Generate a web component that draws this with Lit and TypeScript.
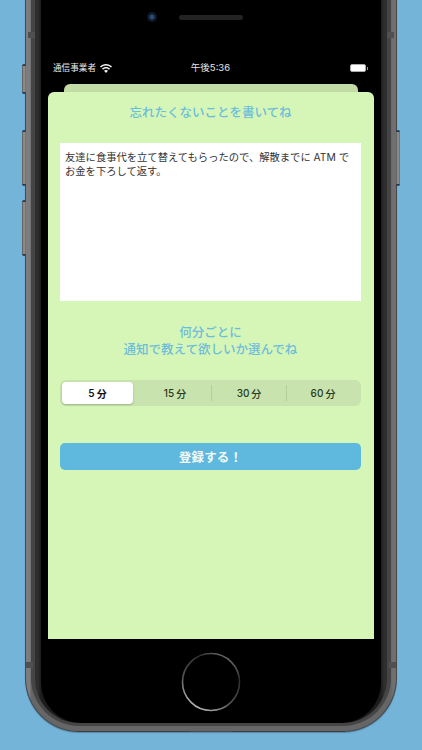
import { LitElement, html, css } from "lit";
import { customElement } from "lit/decorators.js";

@customElement("app-root")
export class AppRoot extends LitElement {
  static styles = css`
    :host {
      display: flex;
      flex-direction: column;
      justify-content: flex-end;
      align-items: center;
      width: 422px;
      height: 750px;
      box-sizing: border-box;
      padding-bottom: 18px;
      overflow: hidden;
      background: #74b4d9;
      font-family: Inter, "Noto Sans CJK JP", sans-serif;
    }
    * { box-sizing: border-box; }
    .phone {
      position: relative;
      flex: none;
      width: 372px;
      height: 792px;
      padding: 1px;
      border-radius: 54px;
      background: #47494b;
      box-shadow: 0 1px 1px rgba(40, 60, 80, 0.35);
    }
    .band1 {
      height: 100%;
      padding: 5px;
      border-radius: 53px;
      background: linear-gradient(90deg, #7d7d7d 0 4px, #666 5px calc(100% - 5px), #6f6f6f calc(100% - 4px));
    }
    .band2 {
      height: 100%;
      padding: 4px 4px 3px;
      border-radius: 48px;
      background: #454545;
    }
    .band3 {
      height: 100%;
      padding: 6px 6px 0;
      border-radius: 44px;
      background: linear-gradient(90deg, #2e2e2e 0 3px, #1c1c1c 6px calc(100% - 6px), #2e2e2e calc(100% - 3px));
    }
    .screen {
      display: flex;
      flex-direction: column;
      height: 100%;
      padding: 56px 7px 0;
      border-radius: 40px;
      background: #000;
    }
    .sensors {
      display: flex;
      justify-content: center;
      align-items: center;
      gap: 22px;
      height: 10px;
      margin: 0 -7px;
      padding-right: 32px;
    }
    .camera {
      width: 10px;
      height: 10px;
      border-radius: 50%;
      background: radial-gradient(circle, #2b4a78 0 2px, #0b1a2c 3px, #141a22 5px);
    }
    .speaker {
      width: 64px;
      height: 5px;
      border-radius: 3px;
      background: #232323;
    }
    .status {
      display: grid;
      grid-template-columns: 1fr auto 1fr;
      align-items: center;
      height: 14px;
      margin: 39px -7px 0;
      padding: 0 13px 0 12px;
      color: #e8e8e8;
      font-size: 8.6px;
      line-height: 14px;
    }
    .carrier { display: flex; align-items: center; gap: 4px; }
    .wifi { width: 12px; height: 9px; }
    .time { font-size: 9.5px; }
    .battery {
      justify-self: end;
      display: flex;
      align-items: center;
      gap: 1px;
    }
    .cell {
      width: 16px;
      height: 8px;
      border-radius: 2px;
      background: #fff;
      border: 1px solid #aaa;
    }
    .nub { width: 1px; height: 3px; background: #999; }
    .back {
      flex: none;
      height: 8px;
      margin: 9px 16px 0;
      border-radius: 6px 6px 0 0;
      background: #c3dba5;
    }
    .card {
      flex: none;
      display: flex;
      flex-direction: column;
      height: 547px;
      padding: 12px 13px 0 12px;
      border-radius: 6px 6px 0 0;
      background: #d6f6b8;
    }
    .heading {
      margin: 0;
      text-align: center;
      color: #6cbdd9;
      font-size: 12.5px;
      font-weight: 500;
      line-height: 17px;
    }
    .memo {
      height: 158px;
      margin-top: 22px;
      padding: 7px 5px;
      background: #fff;
      color: #333;
      font-size: 10.3px;
      line-height: 14px;
    }
    .sub { margin-top: 23px; }
    .segments {
      display: grid;
      grid-template-columns: 75px 75px 75px 1fr;
      height: 26px;
      margin-top: 22px;
      padding: 2px;
      border-radius: 6px;
      background: #c8e3ae;
    }
    .seg {
      display: flex;
      align-items: center;
      justify-content: center;
      color: #2a3a22;
      font-size: 10px;
      font-weight: 500;
      gap: 2px;
      border-right: 1px solid #b4cf9c;
      margin: 3px 0;
    }
    .seg:last-child, .seg.on { border-right: 0; }
    .seg:first-child + .seg { padding-left: 2px; }
    .seg.on {
      margin: 0 4px 0 0;
      border-radius: 4px;
      background: #fff;
      color: #111;
      font-weight: 600;
      box-shadow: 0 1px 2px rgba(60, 80, 40, 0.3);
    }
    .submit {
      display: flex;
      align-items: center;
      justify-content: center;
      height: 27px;
      margin-top: 37px;
      border-radius: 5px;
      background: #5fb8de;
      color: #f2f8f4;
      font-size: 12.5px;
      font-weight: 700;
      letter-spacing: 0.2px;
    }
    .home {
      display: flex;
      justify-content: center;
      margin-top: 13px;
    }
    .ring { width: 60px; height: 60px; }
    .key {
      position: absolute;
      width: 4px;
      border-radius: 2px;
      background: linear-gradient(90deg, #555, #999 50%, #666);
      border-top: 2px solid #2c3c4c;
      border-bottom: 2px solid #2c3c4c;
    }
    .k1 { left: -3px; bottom: 638px; height: 30px; }
    .k2 { left: -3px; bottom: 546px; height: 56px; }
    .k3 { left: -3px; bottom: 476px; height: 56px; }
    .k4 { right: -3px; bottom: 546px; height: 56px; }
    .seam {
      position: absolute;
      width: 7px;
      height: 6px;
      background: #505050;
    }
    .s1 { left: 1px; bottom: 64px; }
    .s2 { right: 1px; bottom: 64px; }
    .s3 { left: 3px; bottom: 694px; }
    .s4 { right: 3px; bottom: 694px; }
    .edge {
      position: absolute;
      bottom: 0;
      height: 1.5px;
      background: #3c3e40;
    }
    .e1 { left: 52px; width: 113px; }
    .e2 { right: 52px; width: 113px; }
  `;

  render() {
    return html`
      <div class="phone">
        <span class="key k1"></span>
        <span class="key k2"></span>
        <span class="key k3"></span>
        <span class="key k4"></span>
        <span class="seam s1"></span>
        <span class="seam s2"></span>
        <span class="seam s3"></span>
        <span class="seam s4"></span>
        <span class="edge e1"></span>
        <span class="edge e2"></span>
        <div class="band1"><div class="band2"><div class="band3">
          <div class="screen">
            <div class="sensors">
              <span class="camera"></span>
              <span class="speaker"></span>
            </div>
            <div class="status">
              <div class="carrier">
                <span>通信事業者</span>
                <svg class="wifi" viewBox="0 0 12 9" fill="#f4f4f4">
                  <path d="M6 0C3.7 0 1.6.9 0 2.4l1 1.1C2.3 2.2 4.1 1.5 6 1.5s3.7.7 5 2l1-1.1C10.4.9 8.3 0 6 0z"/>
                  <path d="M6 3C4.5 3 3.1 3.6 2 4.6l1 1.1C3.8 5 4.9 4.5 6 4.5s2.2.5 3 1.2l1-1.1C8.9 3.6 7.5 3 6 3z"/>
                  <path d="M6 6c-.8 0-1.5.3-2 .8L6 9l2-2.2C7.5 6.3 6.8 6 6 6z"/>
                </svg>
              </div>
              <span class="time">午後5:36</span>
              <div class="battery"><span class="cell"></span><span class="nub"></span></div>
            </div>
            <div class="back"></div>
            <div class="card">
              <h2 class="heading">忘れたくないことを書いてね</h2>
              <div class="memo">友達に食事代を立て替えてもらったので、解散までに ATM で<br />お金を下ろして返す。</div>
              <h2 class="heading sub">何分ごとに<br />通知で教えて欲しいか選んでね</h2>
              <div class="segments">
                <div class="seg on"><span>5</span><span>分</span></div>
                <div class="seg"><span>15</span><span>分</span></div>
                <div class="seg"><span>30</span><span>分</span></div>
                <div class="seg"><span>60</span><span>分</span></div>
              </div>
              <div class="submit">登録する！</div>
            </div>
            <div class="home">
              <svg class="ring" viewBox="0 0 60 60">
                <defs>
                  <linearGradient id="rg" x1="0.2" y1="1" x2="0.8" y2="0">
                    <stop offset="0" stop-color="#c4c4c4" />
                    <stop offset="0.35" stop-color="#555" />
                    <stop offset="0.75" stop-color="#2e2e2e" />
                    <stop offset="1" stop-color="#777" />
                  </linearGradient>
                </defs>
                <circle cx="30" cy="30" r="28.5" fill="none" stroke="url(#rg)" stroke-width="1.6" />
              </svg>
            </div>
          </div>
        </div></div></div>
      </div>
    `;
  }
}
